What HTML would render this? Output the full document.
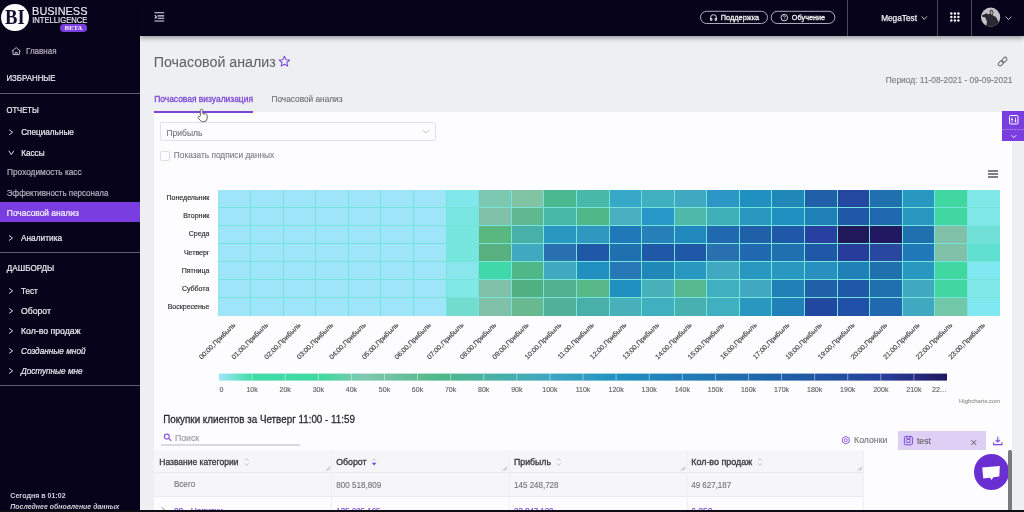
<!DOCTYPE html>
<html><head><meta charset="utf-8">
<style>
*{box-sizing:border-box;margin:0;padding:0}
html,body{width:1024px;height:512px;overflow:hidden;background:#edeff2;font-family:"Liberation Sans",sans-serif}
.a{position:absolute;white-space:nowrap}
.ov{position:absolute;left:0;top:0;z-index:2;will-change:transform}
.hi{z-index:3}
.top{z-index:6}
</style></head><body>
<!-- sidebar & header backgrounds -->
<div class="a" style="left:0;top:0;width:140px;height:512px;background:#07031a"></div>
<div class="a" style="left:140px;top:0;width:884px;height:36px;background:#07031a;box-shadow:0 2px 5px rgba(0,0,0,.38)"></div>
<!-- sidebar separators -->
<div class="a" style="left:0;top:93px;width:140px;height:1px;background:#625a70"></div>
<div class="a" style="left:0;top:252px;width:140px;height:1px;background:#625a70"></div>
<div class="a" style="left:0;top:385px;width:140px;height:1px;background:#625a70"></div>
<!-- active item -->
<div class="a" style="left:0;top:202px;width:140px;height:20px;background:#7a3ee0"></div>

<!-- card -->
<div class="a" style="left:154px;top:112px;width:858px;height:400px;background:#fdfcfe"></div>
<!-- tab underline -->
<div class="a" style="left:154px;top:111px;width:99px;height:2px;background:#7b45d8;z-index:1"></div>

<!-- select box & checkbox -->
<div class="a" style="left:160px;top:122px;width:276px;height:19px;border:1px solid #e2e1e6;border-radius:2px"></div>
<div class="a" style="left:160px;top:151px;width:10px;height:10px;border:1px solid #dedde2;border-radius:2px"></div>

<!-- table boxes -->
<div class="a" style="left:154px;top:450px;width:710px;height:46px;background:#f6f6f8"></div>
<div class="a" style="left:154px;top:472px;width:710px;height:1px;background:#ebebef"></div>
<div class="a" style="left:154px;top:496px;width:710px;height:1px;background:#ebebef"></div>
<div class="a" style="left:331px;top:450px;width:1px;height:60px;background:#f0f0f3"></div>
<div class="a" style="left:509px;top:450px;width:1px;height:60px;background:#f0f0f3"></div>
<div class="a" style="left:687px;top:450px;width:1px;height:60px;background:#f0f0f3"></div>
<div class="a" style="left:863px;top:450px;width:1px;height:60px;background:#f0f0f3"></div>
<div class="a" style="left:161px;top:444px;width:139px;height:1.5px;background:#d9d9de"></div>
<!-- chip -->
<div class="a" style="left:898px;top:431px;width:88px;height:19px;background:#ddd0f4"></div>

<svg class="ov" width="1024" height="512" viewBox="0 0 1024 512">
<defs><linearGradient id="lg" x1="0" x2="1" y1="0" y2="0"><stop offset="0" stop-color="#a0e6f8"/><stop offset="0.045" stop-color="#40dca8"/><stop offset="0.14" stop-color="#40d8a0"/><stop offset="0.2" stop-color="#80c8b0"/><stop offset="0.3" stop-color="#50b888"/><stop offset="0.38" stop-color="#48b0a8"/><stop offset="0.45" stop-color="#40a8c0"/><stop offset="0.55" stop-color="#2090c0"/><stop offset="0.7" stop-color="#2070b0"/><stop offset="0.85" stop-color="#2050a0"/><stop offset="0.92" stop-color="#283c98"/><stop offset="1" stop-color="#201860"/></linearGradient></defs>
<rect x="218" y="190" width="782" height="126" fill="#76e4da"/><rect x="218" y="190" width="32" height="17" fill="#9fe5f9"/><rect x="251" y="190" width="32" height="17" fill="#9fe5f9"/><rect x="284" y="190" width="31" height="17" fill="#9fe5f9"/><rect x="316" y="190" width="32" height="17" fill="#9fe5f9"/><rect x="349" y="190" width="31" height="17" fill="#9fe5f9"/><rect x="381" y="190" width="32" height="17" fill="#9fe5f9"/><rect x="414" y="190" width="32" height="17" fill="#9fe5f9"/><rect x="447" y="190" width="31" height="17" fill="#80e8ea"/><rect x="479" y="190" width="32" height="17" fill="#7cc8b0"/><rect x="512" y="190" width="31" height="17" fill="#80c4a4"/><rect x="544" y="190" width="32" height="17" fill="#4cb890"/><rect x="577" y="190" width="32" height="17" fill="#48b8a8"/><rect x="610" y="190" width="31" height="17" fill="#38a8c8"/><rect x="642" y="190" width="32" height="17" fill="#40b0c0"/><rect x="675" y="190" width="31" height="17" fill="#40a8c0"/><rect x="707" y="190" width="32" height="17" fill="#2c96c6"/><rect x="740" y="190" width="31" height="17" fill="#2090c0"/><rect x="772" y="190" width="32" height="17" fill="#2088b8"/><rect x="805" y="190" width="32" height="17" fill="#2060a8"/><rect x="838" y="190" width="31" height="17" fill="#2448a0"/><rect x="870" y="190" width="32" height="17" fill="#2070b0"/><rect x="903" y="190" width="31" height="17" fill="#2898c0"/><rect x="935" y="190" width="32" height="17" fill="#40d8a0"/><rect x="968" y="190" width="32" height="17" fill="#80e8e8"/><rect x="218" y="208" width="32" height="17" fill="#9fe5f9"/><rect x="251" y="208" width="32" height="17" fill="#9fe5f9"/><rect x="284" y="208" width="31" height="17" fill="#9fe5f9"/><rect x="316" y="208" width="32" height="17" fill="#9fe5f9"/><rect x="349" y="208" width="31" height="17" fill="#9fe5f9"/><rect x="381" y="208" width="32" height="17" fill="#9fe5f9"/><rect x="414" y="208" width="32" height="17" fill="#9fe5f9"/><rect x="447" y="208" width="31" height="17" fill="#7ae6e2"/><rect x="479" y="208" width="32" height="17" fill="#80c0a8"/><rect x="512" y="208" width="31" height="17" fill="#60b890"/><rect x="544" y="208" width="32" height="17" fill="#48b8a8"/><rect x="577" y="208" width="32" height="17" fill="#50b888"/><rect x="610" y="208" width="31" height="17" fill="#48b0c0"/><rect x="642" y="208" width="32" height="17" fill="#2898c8"/><rect x="675" y="208" width="31" height="17" fill="#50b8a8"/><rect x="707" y="208" width="32" height="17" fill="#40b0b8"/><rect x="740" y="208" width="31" height="17" fill="#2898c0"/><rect x="772" y="208" width="32" height="17" fill="#2090c0"/><rect x="805" y="208" width="32" height="17" fill="#2080b8"/><rect x="838" y="208" width="31" height="17" fill="#2058a8"/><rect x="870" y="208" width="32" height="17" fill="#2068b0"/><rect x="903" y="208" width="31" height="17" fill="#2898c0"/><rect x="935" y="208" width="32" height="17" fill="#40d8a0"/><rect x="968" y="208" width="32" height="17" fill="#80e8e8"/><rect x="218" y="226" width="32" height="17" fill="#9fe5f9"/><rect x="251" y="226" width="32" height="17" fill="#9fe5f9"/><rect x="284" y="226" width="31" height="17" fill="#9fe5f9"/><rect x="316" y="226" width="32" height="17" fill="#9fe5f9"/><rect x="349" y="226" width="31" height="17" fill="#9fe5f9"/><rect x="381" y="226" width="32" height="17" fill="#9fe5f9"/><rect x="414" y="226" width="32" height="17" fill="#9fe5f9"/><rect x="447" y="226" width="31" height="17" fill="#76e6de"/><rect x="479" y="226" width="32" height="17" fill="#58b880"/><rect x="512" y="226" width="31" height="17" fill="#48b0a8"/><rect x="544" y="226" width="32" height="17" fill="#2898c0"/><rect x="577" y="226" width="32" height="17" fill="#3098c0"/><rect x="610" y="226" width="31" height="17" fill="#2078b8"/><rect x="642" y="226" width="32" height="17" fill="#2880b8"/><rect x="675" y="226" width="31" height="17" fill="#2088bc"/><rect x="707" y="226" width="32" height="17" fill="#2068b0"/><rect x="740" y="226" width="31" height="17" fill="#2060a8"/><rect x="772" y="226" width="32" height="17" fill="#2058a8"/><rect x="805" y="226" width="32" height="17" fill="#2840a0"/><rect x="838" y="226" width="31" height="17" fill="#201858"/><rect x="870" y="226" width="32" height="17" fill="#201860"/><rect x="903" y="226" width="31" height="17" fill="#2070b0"/><rect x="935" y="226" width="32" height="17" fill="#80c0a8"/><rect x="968" y="226" width="32" height="17" fill="#70e0d8"/><rect x="218" y="244" width="32" height="17" fill="#9fe5f9"/><rect x="251" y="244" width="32" height="17" fill="#9fe5f9"/><rect x="284" y="244" width="31" height="17" fill="#9fe5f9"/><rect x="316" y="244" width="32" height="17" fill="#9fe5f9"/><rect x="349" y="244" width="31" height="17" fill="#9fe5f9"/><rect x="381" y="244" width="32" height="17" fill="#9fe5f9"/><rect x="414" y="244" width="32" height="17" fill="#9fe5f9"/><rect x="447" y="244" width="31" height="17" fill="#76e6de"/><rect x="479" y="244" width="32" height="17" fill="#58b080"/><rect x="512" y="244" width="31" height="17" fill="#40a8c0"/><rect x="544" y="244" width="32" height="17" fill="#2870b0"/><rect x="577" y="244" width="32" height="17" fill="#2058a8"/><rect x="610" y="244" width="31" height="17" fill="#2070b0"/><rect x="642" y="244" width="32" height="17" fill="#2058a8"/><rect x="675" y="244" width="31" height="17" fill="#2058a8"/><rect x="707" y="244" width="32" height="17" fill="#2870b0"/><rect x="740" y="244" width="31" height="17" fill="#2068b0"/><rect x="772" y="244" width="32" height="17" fill="#2070b0"/><rect x="805" y="244" width="32" height="17" fill="#2058a8"/><rect x="838" y="244" width="31" height="17" fill="#283c9c"/><rect x="870" y="244" width="32" height="17" fill="#2848a0"/><rect x="903" y="244" width="31" height="17" fill="#2078b8"/><rect x="935" y="244" width="32" height="17" fill="#80c0a8"/><rect x="968" y="244" width="32" height="17" fill="#60e0d0"/><rect x="218" y="262" width="32" height="17" fill="#9fe5f9"/><rect x="251" y="262" width="32" height="17" fill="#9fe5f9"/><rect x="284" y="262" width="31" height="17" fill="#9fe5f9"/><rect x="316" y="262" width="32" height="17" fill="#9fe5f9"/><rect x="349" y="262" width="31" height="17" fill="#9fe5f9"/><rect x="381" y="262" width="32" height="17" fill="#9fe5f9"/><rect x="414" y="262" width="32" height="17" fill="#9fe5f9"/><rect x="447" y="262" width="31" height="17" fill="#88e6ec"/><rect x="479" y="262" width="32" height="17" fill="#40d8a8"/><rect x="512" y="262" width="31" height="17" fill="#50b888"/><rect x="544" y="262" width="32" height="17" fill="#40a8c0"/><rect x="577" y="262" width="32" height="17" fill="#2090c0"/><rect x="610" y="262" width="31" height="17" fill="#2878b8"/><rect x="642" y="262" width="32" height="17" fill="#2088b8"/><rect x="675" y="262" width="31" height="17" fill="#2898c0"/><rect x="707" y="262" width="32" height="17" fill="#40a8c0"/><rect x="740" y="262" width="31" height="17" fill="#2898c0"/><rect x="772" y="262" width="32" height="17" fill="#2898c0"/><rect x="805" y="262" width="32" height="17" fill="#2890c0"/><rect x="838" y="262" width="31" height="17" fill="#2080b8"/><rect x="870" y="262" width="32" height="17" fill="#2070b0"/><rect x="903" y="262" width="31" height="17" fill="#2898c0"/><rect x="935" y="262" width="32" height="17" fill="#40d8a0"/><rect x="968" y="262" width="32" height="17" fill="#80e8f0"/><rect x="218" y="280" width="32" height="17" fill="#9fe5f9"/><rect x="251" y="280" width="32" height="17" fill="#9fe5f9"/><rect x="284" y="280" width="31" height="17" fill="#9fe5f9"/><rect x="316" y="280" width="32" height="17" fill="#9fe5f9"/><rect x="349" y="280" width="31" height="17" fill="#9fe5f9"/><rect x="381" y="280" width="32" height="17" fill="#9fe5f9"/><rect x="414" y="280" width="32" height="17" fill="#9fe5f9"/><rect x="447" y="280" width="31" height="17" fill="#80e8e6"/><rect x="479" y="280" width="32" height="17" fill="#80c0a8"/><rect x="512" y="280" width="31" height="17" fill="#50b080"/><rect x="544" y="280" width="32" height="17" fill="#50b090"/><rect x="577" y="280" width="32" height="17" fill="#58b888"/><rect x="610" y="280" width="31" height="17" fill="#2090c0"/><rect x="642" y="280" width="32" height="17" fill="#48b0b8"/><rect x="675" y="280" width="31" height="17" fill="#58b890"/><rect x="707" y="280" width="32" height="17" fill="#40b0c0"/><rect x="740" y="280" width="31" height="17" fill="#40a8c0"/><rect x="772" y="280" width="32" height="17" fill="#2080b8"/><rect x="805" y="280" width="32" height="17" fill="#2060a8"/><rect x="838" y="280" width="31" height="17" fill="#2058a8"/><rect x="870" y="280" width="32" height="17" fill="#2070b0"/><rect x="903" y="280" width="31" height="17" fill="#40a8c0"/><rect x="935" y="280" width="32" height="17" fill="#40d8a0"/><rect x="968" y="280" width="32" height="17" fill="#80e8e8"/><rect x="218" y="298" width="32" height="18" fill="#9fe5f9"/><rect x="251" y="298" width="32" height="18" fill="#9fe5f9"/><rect x="284" y="298" width="31" height="18" fill="#9fe5f9"/><rect x="316" y="298" width="32" height="18" fill="#9fe5f9"/><rect x="349" y="298" width="31" height="18" fill="#9fe5f9"/><rect x="381" y="298" width="32" height="18" fill="#9fe5f9"/><rect x="414" y="298" width="32" height="18" fill="#9fe5f9"/><rect x="447" y="298" width="31" height="18" fill="#72dcce"/><rect x="479" y="298" width="32" height="18" fill="#80c0a8"/><rect x="512" y="298" width="31" height="18" fill="#68b890"/><rect x="544" y="298" width="32" height="18" fill="#50b098"/><rect x="577" y="298" width="32" height="18" fill="#48b0a8"/><rect x="610" y="298" width="31" height="18" fill="#48b0b8"/><rect x="642" y="298" width="32" height="18" fill="#40b0c0"/><rect x="675" y="298" width="31" height="18" fill="#48b0b0"/><rect x="707" y="298" width="32" height="18" fill="#40b0c0"/><rect x="740" y="298" width="31" height="18" fill="#2898c0"/><rect x="772" y="298" width="32" height="18" fill="#2080b8"/><rect x="805" y="298" width="32" height="18" fill="#2048a0"/><rect x="838" y="298" width="31" height="18" fill="#2050a8"/><rect x="870" y="298" width="32" height="18" fill="#2068b0"/><rect x="903" y="298" width="31" height="18" fill="#40a8c0"/><rect x="935" y="298" width="32" height="18" fill="#70c8a8"/><rect x="968" y="298" width="32" height="18" fill="#80e8f0"/>
<rect x="219" y="373.6" width="728" height="7" fill="url(#lg)"/><rect x="251.6" y="373.6" width="1" height="7" fill="#ffffff" opacity="0.45"/><rect x="284.7" y="373.6" width="1" height="7" fill="#ffffff" opacity="0.45"/><rect x="317.8" y="373.6" width="1" height="7" fill="#ffffff" opacity="0.45"/><rect x="350.9" y="373.6" width="1" height="7" fill="#ffffff" opacity="0.45"/><rect x="384.0" y="373.6" width="1" height="7" fill="#ffffff" opacity="0.45"/><rect x="417.0" y="373.6" width="1" height="7" fill="#ffffff" opacity="0.45"/><rect x="450.1" y="373.6" width="1" height="7" fill="#ffffff" opacity="0.45"/><rect x="483.2" y="373.6" width="1" height="7" fill="#ffffff" opacity="0.45"/><rect x="516.3" y="373.6" width="1" height="7" fill="#ffffff" opacity="0.45"/><rect x="549.4" y="373.6" width="1" height="7" fill="#ffffff" opacity="0.45"/><rect x="582.5" y="373.6" width="1" height="7" fill="#ffffff" opacity="0.45"/><rect x="615.6" y="373.6" width="1" height="7" fill="#ffffff" opacity="0.45"/><rect x="648.7" y="373.6" width="1" height="7" fill="#ffffff" opacity="0.45"/><rect x="681.8" y="373.6" width="1" height="7" fill="#ffffff" opacity="0.45"/><rect x="714.9" y="373.6" width="1" height="7" fill="#ffffff" opacity="0.45"/><rect x="748.0" y="373.6" width="1" height="7" fill="#ffffff" opacity="0.45"/><rect x="781.0" y="373.6" width="1" height="7" fill="#ffffff" opacity="0.45"/><rect x="814.1" y="373.6" width="1" height="7" fill="#ffffff" opacity="0.45"/><rect x="847.2" y="373.6" width="1" height="7" fill="#ffffff" opacity="0.45"/><rect x="880.3" y="373.6" width="1" height="7" fill="#ffffff" opacity="0.45"/><rect x="913.4" y="373.6" width="1" height="7" fill="#ffffff" opacity="0.45"/>
<text x="26.06" y="53.75" font-family="Liberation Sans" font-size="9.00" fill="#b4b0be" font-weight="normal" font-style="normal" textLength="30.48" lengthAdjust="spacingAndGlyphs" stroke="#b4b0be" stroke-width="0.22">Главная</text><text x="6.46" y="81.40" font-family="Liberation Sans" font-size="9.00" fill="#ebe9f0" font-weight="normal" font-style="normal" textLength="49.08" lengthAdjust="spacingAndGlyphs" stroke="#ebe9f0" stroke-width="0.22">ИЗБРАННЫЕ</text><text x="6.46" y="112.70" font-family="Liberation Sans" font-size="9.00" fill="#ebe9f0" font-weight="normal" font-style="normal" textLength="32.38" lengthAdjust="spacingAndGlyphs" stroke="#ebe9f0" stroke-width="0.22">ОТЧЕТЫ</text><text x="21.16" y="135.00" font-family="Liberation Sans" font-size="9.00" fill="#ebe9f0" font-weight="normal" font-style="normal" textLength="52.68" lengthAdjust="spacingAndGlyphs" stroke="#ebe9f0" stroke-width="0.22">Специальные</text><text x="21.16" y="155.50" font-family="Liberation Sans" font-size="9.00" fill="#ebe9f0" font-weight="normal" font-style="normal" textLength="23.38" lengthAdjust="spacingAndGlyphs" stroke="#ebe9f0" stroke-width="0.22">Кассы</text><text x="7.06" y="175.10" font-family="Liberation Sans" font-size="9.00" fill="#b4b0be" font-weight="normal" font-style="normal" textLength="74.58" lengthAdjust="spacingAndGlyphs" stroke="#b4b0be" stroke-width="0.22">Проходимость касс</text><text x="6.86" y="195.60" font-family="Liberation Sans" font-size="9.00" fill="#b4b0be" font-weight="normal" font-style="normal" textLength="101.58" lengthAdjust="spacingAndGlyphs" stroke="#b4b0be" stroke-width="0.22">Эффективность персонала</text><text x="6.86" y="216.20" font-family="Liberation Sans" font-size="9.00" fill="#f6f2ff" font-weight="normal" font-style="normal" textLength="71.88" lengthAdjust="spacingAndGlyphs" stroke="#f6f2ff" stroke-width="0.22">Почасовой анализ</text><text x="20.96" y="240.60" font-family="Liberation Sans" font-size="9.00" fill="#ebe9f0" font-weight="normal" font-style="normal" textLength="41.18" lengthAdjust="spacingAndGlyphs" stroke="#ebe9f0" stroke-width="0.22">Аналитика</text><text x="6.86" y="271.00" font-family="Liberation Sans" font-size="9.00" fill="#ebe9f0" font-weight="normal" font-style="normal" textLength="47.38" lengthAdjust="spacingAndGlyphs" stroke="#ebe9f0" stroke-width="0.22">ДАШБОРДЫ</text><text x="20.96" y="293.70" font-family="Liberation Sans" font-size="9.00" fill="#ebe9f0" font-weight="normal" font-style="normal" textLength="16.68" lengthAdjust="spacingAndGlyphs" stroke="#ebe9f0" stroke-width="0.22">Тест</text><text x="20.96" y="313.60" font-family="Liberation Sans" font-size="9.00" fill="#ebe9f0" font-weight="normal" font-style="normal" textLength="29.98" lengthAdjust="spacingAndGlyphs" stroke="#ebe9f0" stroke-width="0.22">Оборот</text><text x="20.96" y="334.00" font-family="Liberation Sans" font-size="9.00" fill="#ebe9f0" font-weight="normal" font-style="normal" textLength="59.58" lengthAdjust="spacingAndGlyphs" stroke="#ebe9f0" stroke-width="0.22">Кол-во продаж</text><text x="20.96" y="353.80" font-family="Liberation Sans" font-size="9.00" fill="#ebe9f0" font-weight="normal" font-style="italic" textLength="64.58" lengthAdjust="spacingAndGlyphs" stroke="#ebe9f0" stroke-width="0.22">Созданные мной</text><text x="20.96" y="373.75" font-family="Liberation Sans" font-size="9.00" fill="#ebe9f0" font-weight="normal" font-style="italic" textLength="61.58" lengthAdjust="spacingAndGlyphs" stroke="#ebe9f0" stroke-width="0.22">Доступные мне</text><text x="10.33" y="498.00" font-family="Liberation Sans" font-size="7.80" fill="#d6d2de" font-weight="bold" font-style="normal" textLength="55.34" lengthAdjust="spacingAndGlyphs">Сегодня в 01:02</text><text x="10.34" y="509.40" font-family="Liberation Sans" font-size="7.60" fill="#d6d2de" font-weight="bold" font-style="italic" textLength="109.11" lengthAdjust="spacingAndGlyphs">Последнее обновление данных</text><text x="5.02" y="23.90" font-family="Liberation Serif" font-size="21.38" fill="#140c2c" font-weight="bold" font-style="normal" textLength="19.67" lengthAdjust="spacingAndGlyphs">BI</text><text x="32.09" y="14.60" font-family="Liberation Sans" font-size="10.20" fill="#ece9f2" font-weight="normal" font-style="normal" textLength="55.42" lengthAdjust="spacingAndGlyphs" stroke="#ece9f2" stroke-width="0.15">BUSINESS</text><text x="32.21" y="22.70" font-family="Liberation Sans" font-size="8.20" fill="#ece9f2" font-weight="normal" font-style="normal" textLength="55.18" lengthAdjust="spacingAndGlyphs" stroke="#ece9f2" stroke-width="0.15">INTELLIGENCE</text><text x="64.60" y="30.10" font-family="Liberation Serif" font-size="6.60" fill="#f6f2ff" font-weight="bold" font-style="normal" textLength="17.79" lengthAdjust="spacingAndGlyphs">BETA</text><text x="720.79" y="20.00" font-family="Liberation Sans" font-size="7.60" fill="#f2f2f2" font-weight="normal" font-style="normal" textLength="38.41" lengthAdjust="spacingAndGlyphs" stroke="#f2f2f2" stroke-width="0.3">Поддержка</text><text x="791.84" y="20.00" font-family="Liberation Sans" font-size="7.60" fill="#f2f2f2" font-weight="normal" font-style="normal" textLength="33.31" lengthAdjust="spacingAndGlyphs" stroke="#f2f2f2" stroke-width="0.3">Обучение</text><text x="881.16" y="20.70" font-family="Liberation Sans" font-size="9.00" fill="#f0eef5" font-weight="normal" font-style="normal" textLength="35.78" lengthAdjust="spacingAndGlyphs" stroke="#f0eef5" stroke-width="0.25">MegaTest</text><text x="153.79" y="67.10" font-family="Liberation Sans" font-size="15.20" fill="#606066" font-weight="normal" font-style="normal" textLength="121.92" lengthAdjust="spacingAndGlyphs" stroke="#606066" stroke-width="0.05">Почасовой анализ</text><text x="885.75" y="82.50" font-family="Liberation Sans" font-size="9.20" fill="#7a7a80" font-weight="normal" font-style="normal" textLength="126.80" lengthAdjust="spacingAndGlyphs" stroke="#7a7a80" stroke-width="0.12">Период: 11-08-2021 - 09-09-2021</text><text x="154.20" y="102.30" font-family="Liberation Sans" font-size="8.40" fill="#7a45d6" font-weight="normal" font-style="normal" textLength="98.81" lengthAdjust="spacingAndGlyphs" stroke="#7a45d6" stroke-width="0.28">Почасовая визуализация</text><text x="271.50" y="102.30" font-family="Liberation Sans" font-size="8.40" fill="#6e6e74" font-weight="normal" font-style="normal" textLength="71.01" lengthAdjust="spacingAndGlyphs" stroke="#6e6e74" stroke-width="0.12">Почасовой анализ</text><text x="166.47" y="135.50" font-family="Liberation Sans" font-size="8.80" fill="#707076" font-weight="normal" font-style="normal" textLength="35.96" lengthAdjust="spacingAndGlyphs" stroke="#707076" stroke-width="0.1">Прибыль</text><text x="173.80" y="158.40" font-family="Liberation Sans" font-size="8.40" fill="#7a7a80" font-weight="normal" font-style="normal" textLength="100.41" lengthAdjust="spacingAndGlyphs" stroke="#7a7a80" stroke-width="0.1">Показать подписи данных</text><text x="209.4" y="200.20" text-anchor="end" font-family="Liberation Sans" font-size="7" fill="#333" stroke="#333" stroke-width="0.18">Понедельник</text><text x="209.4" y="218.30" text-anchor="end" font-family="Liberation Sans" font-size="7" fill="#333" stroke="#333" stroke-width="0.18">Вторник</text><text x="209.4" y="236.40" text-anchor="end" font-family="Liberation Sans" font-size="7" fill="#333" stroke="#333" stroke-width="0.18">Среда</text><text x="209.4" y="254.50" text-anchor="end" font-family="Liberation Sans" font-size="7" fill="#333" stroke="#333" stroke-width="0.18">Четверг</text><text x="209.4" y="272.60" text-anchor="end" font-family="Liberation Sans" font-size="7" fill="#333" stroke="#333" stroke-width="0.18">Пятница</text><text x="209.4" y="290.70" text-anchor="end" font-family="Liberation Sans" font-size="7" fill="#333" stroke="#333" stroke-width="0.18">Суббота</text><text x="209.4" y="308.80" text-anchor="end" font-family="Liberation Sans" font-size="7" fill="#333" stroke="#333" stroke-width="0.18">Воскресенье</text><text x="235.9" y="325.5" text-anchor="end" font-family="Liberation Sans" font-size="6.9" fill="#484848" stroke="#484848" stroke-width="0.18" transform="rotate(-45 235.9 325.5)">00:00,Прибыль</text><text x="268.5" y="325.5" text-anchor="end" font-family="Liberation Sans" font-size="6.9" fill="#484848" stroke="#484848" stroke-width="0.18" transform="rotate(-45 268.5 325.5)">01:00,Прибыль</text><text x="301.1" y="325.5" text-anchor="end" font-family="Liberation Sans" font-size="6.9" fill="#484848" stroke="#484848" stroke-width="0.18" transform="rotate(-45 301.1 325.5)">02:00,Прибыль</text><text x="333.6" y="325.5" text-anchor="end" font-family="Liberation Sans" font-size="6.9" fill="#484848" stroke="#484848" stroke-width="0.18" transform="rotate(-45 333.6 325.5)">03:00,Прибыль</text><text x="366.2" y="325.5" text-anchor="end" font-family="Liberation Sans" font-size="6.9" fill="#484848" stroke="#484848" stroke-width="0.18" transform="rotate(-45 366.2 325.5)">04:00,Прибыль</text><text x="398.8" y="325.5" text-anchor="end" font-family="Liberation Sans" font-size="6.9" fill="#484848" stroke="#484848" stroke-width="0.18" transform="rotate(-45 398.8 325.5)">05:00,Прибыль</text><text x="431.4" y="325.5" text-anchor="end" font-family="Liberation Sans" font-size="6.9" fill="#484848" stroke="#484848" stroke-width="0.18" transform="rotate(-45 431.4 325.5)">06:00,Прибыль</text><text x="464.0" y="325.5" text-anchor="end" font-family="Liberation Sans" font-size="6.9" fill="#484848" stroke="#484848" stroke-width="0.18" transform="rotate(-45 464.0 325.5)">07:00,Прибыль</text><text x="496.6" y="325.5" text-anchor="end" font-family="Liberation Sans" font-size="6.9" fill="#484848" stroke="#484848" stroke-width="0.18" transform="rotate(-45 496.6 325.5)">08:00,Прибыль</text><text x="529.1" y="325.5" text-anchor="end" font-family="Liberation Sans" font-size="6.9" fill="#484848" stroke="#484848" stroke-width="0.18" transform="rotate(-45 529.1 325.5)">09:00,Прибыль</text><text x="561.7" y="325.5" text-anchor="end" font-family="Liberation Sans" font-size="6.9" fill="#484848" stroke="#484848" stroke-width="0.18" transform="rotate(-45 561.7 325.5)">10:00,Прибыль</text><text x="594.3" y="325.5" text-anchor="end" font-family="Liberation Sans" font-size="6.9" fill="#484848" stroke="#484848" stroke-width="0.18" transform="rotate(-45 594.3 325.5)">11:00,Прибыль</text><text x="626.9" y="325.5" text-anchor="end" font-family="Liberation Sans" font-size="6.9" fill="#484848" stroke="#484848" stroke-width="0.18" transform="rotate(-45 626.9 325.5)">12:00,Прибыль</text><text x="659.5" y="325.5" text-anchor="end" font-family="Liberation Sans" font-size="6.9" fill="#484848" stroke="#484848" stroke-width="0.18" transform="rotate(-45 659.5 325.5)">13:00,Прибыль</text><text x="692.1" y="325.5" text-anchor="end" font-family="Liberation Sans" font-size="6.9" fill="#484848" stroke="#484848" stroke-width="0.18" transform="rotate(-45 692.1 325.5)">14:00,Прибыль</text><text x="724.6" y="325.5" text-anchor="end" font-family="Liberation Sans" font-size="6.9" fill="#484848" stroke="#484848" stroke-width="0.18" transform="rotate(-45 724.6 325.5)">15:00,Прибыль</text><text x="757.2" y="325.5" text-anchor="end" font-family="Liberation Sans" font-size="6.9" fill="#484848" stroke="#484848" stroke-width="0.18" transform="rotate(-45 757.2 325.5)">16:00,Прибыль</text><text x="789.8" y="325.5" text-anchor="end" font-family="Liberation Sans" font-size="6.9" fill="#484848" stroke="#484848" stroke-width="0.18" transform="rotate(-45 789.8 325.5)">17:00,Прибыль</text><text x="822.4" y="325.5" text-anchor="end" font-family="Liberation Sans" font-size="6.9" fill="#484848" stroke="#484848" stroke-width="0.18" transform="rotate(-45 822.4 325.5)">18:00,Прибыль</text><text x="855.0" y="325.5" text-anchor="end" font-family="Liberation Sans" font-size="6.9" fill="#484848" stroke="#484848" stroke-width="0.18" transform="rotate(-45 855.0 325.5)">19:00,Прибыль</text><text x="887.6" y="325.5" text-anchor="end" font-family="Liberation Sans" font-size="6.9" fill="#484848" stroke="#484848" stroke-width="0.18" transform="rotate(-45 887.6 325.5)">20:00,Прибыль</text><text x="920.1" y="325.5" text-anchor="end" font-family="Liberation Sans" font-size="6.9" fill="#484848" stroke="#484848" stroke-width="0.18" transform="rotate(-45 920.1 325.5)">21:00,Прибыль</text><text x="952.7" y="325.5" text-anchor="end" font-family="Liberation Sans" font-size="6.9" fill="#484848" stroke="#484848" stroke-width="0.18" transform="rotate(-45 952.7 325.5)">22:00,Прибыль</text><text x="985.3" y="325.5" text-anchor="end" font-family="Liberation Sans" font-size="6.9" fill="#484848" stroke="#484848" stroke-width="0.18" transform="rotate(-45 985.3 325.5)">23:00,Прибыль</text><text x="219.5" y="392.3" font-family="Liberation Sans" font-size="7" fill="#666" stroke="#666" stroke-width="0.15">0</text><text x="252.1" y="392.3" text-anchor="middle" font-family="Liberation Sans" font-size="7" fill="#666" stroke="#666" stroke-width="0.15">10k</text><text x="285.2" y="392.3" text-anchor="middle" font-family="Liberation Sans" font-size="7" fill="#666" stroke="#666" stroke-width="0.15">20k</text><text x="318.3" y="392.3" text-anchor="middle" font-family="Liberation Sans" font-size="7" fill="#666" stroke="#666" stroke-width="0.15">30k</text><text x="351.4" y="392.3" text-anchor="middle" font-family="Liberation Sans" font-size="7" fill="#666" stroke="#666" stroke-width="0.15">40k</text><text x="384.5" y="392.3" text-anchor="middle" font-family="Liberation Sans" font-size="7" fill="#666" stroke="#666" stroke-width="0.15">50k</text><text x="417.5" y="392.3" text-anchor="middle" font-family="Liberation Sans" font-size="7" fill="#666" stroke="#666" stroke-width="0.15">60k</text><text x="450.6" y="392.3" text-anchor="middle" font-family="Liberation Sans" font-size="7" fill="#666" stroke="#666" stroke-width="0.15">70k</text><text x="483.7" y="392.3" text-anchor="middle" font-family="Liberation Sans" font-size="7" fill="#666" stroke="#666" stroke-width="0.15">80k</text><text x="516.8" y="392.3" text-anchor="middle" font-family="Liberation Sans" font-size="7" fill="#666" stroke="#666" stroke-width="0.15">90k</text><text x="549.9" y="392.3" text-anchor="middle" font-family="Liberation Sans" font-size="7" fill="#666" stroke="#666" stroke-width="0.15">100k</text><text x="583.0" y="392.3" text-anchor="middle" font-family="Liberation Sans" font-size="7" fill="#666" stroke="#666" stroke-width="0.15">110k</text><text x="616.1" y="392.3" text-anchor="middle" font-family="Liberation Sans" font-size="7" fill="#666" stroke="#666" stroke-width="0.15">120k</text><text x="649.2" y="392.3" text-anchor="middle" font-family="Liberation Sans" font-size="7" fill="#666" stroke="#666" stroke-width="0.15">130k</text><text x="682.3" y="392.3" text-anchor="middle" font-family="Liberation Sans" font-size="7" fill="#666" stroke="#666" stroke-width="0.15">140k</text><text x="715.4" y="392.3" text-anchor="middle" font-family="Liberation Sans" font-size="7" fill="#666" stroke="#666" stroke-width="0.15">150k</text><text x="748.5" y="392.3" text-anchor="middle" font-family="Liberation Sans" font-size="7" fill="#666" stroke="#666" stroke-width="0.15">160k</text><text x="781.5" y="392.3" text-anchor="middle" font-family="Liberation Sans" font-size="7" fill="#666" stroke="#666" stroke-width="0.15">170k</text><text x="814.6" y="392.3" text-anchor="middle" font-family="Liberation Sans" font-size="7" fill="#666" stroke="#666" stroke-width="0.15">180k</text><text x="847.7" y="392.3" text-anchor="middle" font-family="Liberation Sans" font-size="7" fill="#666" stroke="#666" stroke-width="0.15">190k</text><text x="880.8" y="392.3" text-anchor="middle" font-family="Liberation Sans" font-size="7" fill="#666" stroke="#666" stroke-width="0.15">200k</text><text x="913.9" y="392.3" text-anchor="middle" font-family="Liberation Sans" font-size="7" fill="#666" stroke="#666" stroke-width="0.15">210k</text><text x="932" y="392.3" font-family="Liberation Sans" font-size="7" fill="#666" stroke="#666" stroke-width="0.15">22…</text><text x="959.06" y="403.30" font-family="Liberation Sans" font-size="5.60" fill="#999999" font-weight="normal" font-style="normal" textLength="41.27" lengthAdjust="spacingAndGlyphs" stroke="#999999" stroke-width="0.15">Highcharts.com</text><text x="163.18" y="422.90" font-family="Liberation Sans" font-size="10.40" fill="#2c2c32" font-weight="normal" font-style="normal" textLength="191.75" lengthAdjust="spacingAndGlyphs" stroke="#2c2c32" stroke-width="0.3">Покупки клиентов за Четверг 11:00 - 11:59</text><text x="175.00" y="440.50" font-family="Liberation Sans" font-size="8.40" fill="#9a9aa0" font-weight="normal" font-style="normal" textLength="24.01" lengthAdjust="spacingAndGlyphs" stroke="#9a9aa0" stroke-width="0.15">Поиск</text><text x="854.08" y="443.40" font-family="Liberation Sans" font-size="8.60" fill="#77777c" font-weight="normal" font-style="normal" textLength="33.23" lengthAdjust="spacingAndGlyphs" stroke="#77777c" stroke-width="0.15">Колонки</text><text x="916.98" y="444.00" font-family="Liberation Sans" font-size="8.60" fill="#66666c" font-weight="normal" font-style="normal" textLength="13.93" lengthAdjust="spacingAndGlyphs" stroke="#66666c" stroke-width="0.15">test</text><text x="159.30" y="465.00" font-family="Liberation Sans" font-size="8.40" fill="#38383c" font-weight="normal" font-style="normal" textLength="79.11" lengthAdjust="spacingAndGlyphs" stroke="#38383c" stroke-width="0.3">Название категории</text><text x="336.30" y="465.00" font-family="Liberation Sans" font-size="8.40" fill="#38383c" font-weight="normal" font-style="normal" textLength="30.21" lengthAdjust="spacingAndGlyphs" stroke="#38383c" stroke-width="0.3">Оборот</text><text x="514.10" y="465.00" font-family="Liberation Sans" font-size="8.40" fill="#38383c" font-weight="normal" font-style="normal" textLength="36.91" lengthAdjust="spacingAndGlyphs" stroke="#38383c" stroke-width="0.3">Прибыль</text><text x="691.20" y="465.00" font-family="Liberation Sans" font-size="8.40" fill="#38383c" font-weight="normal" font-style="normal" textLength="61.01" lengthAdjust="spacingAndGlyphs" stroke="#38383c" stroke-width="0.3">Кол-во продаж</text><text x="173.90" y="487.40" font-family="Liberation Sans" font-size="8.40" fill="#77777c" font-weight="normal" font-style="normal" textLength="21.31" lengthAdjust="spacingAndGlyphs" stroke="#77777c" stroke-width="0.15">Всего</text><text x="336.30" y="487.60" font-family="Liberation Sans" font-size="8.40" fill="#77777c" font-weight="normal" font-style="normal" textLength="44.91" lengthAdjust="spacingAndGlyphs" stroke="#77777c" stroke-width="0.15">800 518,809</text><text x="514.10" y="487.60" font-family="Liberation Sans" font-size="8.40" fill="#77777c" font-weight="normal" font-style="normal" textLength="44.41" lengthAdjust="spacingAndGlyphs" stroke="#77777c" stroke-width="0.15">145 248,728</text><text x="691.20" y="487.60" font-family="Liberation Sans" font-size="8.40" fill="#77777c" font-weight="normal" font-style="normal" textLength="40.01" lengthAdjust="spacingAndGlyphs" stroke="#77777c" stroke-width="0.15">49 627,187</text><text x="173.90" y="514.20" font-family="Liberation Sans" font-size="8.40" fill="#7b45d8" font-weight="normal" font-style="normal" textLength="49.11" lengthAdjust="spacingAndGlyphs" stroke="#7b45d8" stroke-width="0.15">08 - Напитки</text><text x="336.30" y="514.20" font-family="Liberation Sans" font-size="8.40" fill="#7b45d8" font-weight="normal" font-style="normal" textLength="44.21" lengthAdjust="spacingAndGlyphs" stroke="#7b45d8" stroke-width="0.15">135 225 165</text><text x="514.10" y="514.20" font-family="Liberation Sans" font-size="8.40" fill="#7b45d8" font-weight="normal" font-style="normal" textLength="39.41" lengthAdjust="spacingAndGlyphs" stroke="#7b45d8" stroke-width="0.15">23 847 120</text><text x="691.20" y="514.20" font-family="Liberation Sans" font-size="8.40" fill="#7b45d8" font-weight="normal" font-style="normal" textLength="21.31" lengthAdjust="spacingAndGlyphs" stroke="#7b45d8" stroke-width="0.15">6 250</text>
</svg>

<!-- icons -->
<svg class="a hi" style="left:0;top:0" width="1024" height="512" viewBox="0 0 1024 512">
  <!-- logo circle is under text: drawn in separate div below -->
  <!-- home icon -->
  <path d="M11.8 51.2 L16.2 47.6 L20.6 51.2 M13 50.4 V54.6 H19.4 V50.4 M15.2 54.6 V52.4 H17.2 V54.6" fill="none" stroke="#cfcbd8" stroke-width="0.9"/>
  <!-- sidebar chevrons -->
  <g fill="none" stroke="#dedbe6" stroke-width="1">
    <path d="M9.2 129.8 L12.6 132.3 L9.2 134.8"/>
    <path d="M8.8 150.8 L11.3 154.6 L13.8 150.8"/>
    <path d="M9 235.5 L12.5 238 L9 240.5"/>
    <path d="M9.2 288.4 L12.6 290.9 L9.2 293.4"/>
    <path d="M9.2 308.4 L12.6 310.9 L9.2 313.4"/>
    <path d="M9.2 328.4 L12.6 330.9 L9.2 333.4"/>
    <path d="M9.2 348.4 L12.6 350.9 L9.2 353.4"/>
    <path d="M9.2 368.4 L12.6 370.9 L9.2 373.4"/>
  </g>
  <!-- header hamburger -->
  <path d="M154.5 12.8H164.2M157.6 15.9H164.2M157.6 18.2H164.2M154.5 21H164.2M154.8 15.2L156.5 16.9L154.8 18.6" fill="none" stroke="#e6e3ee" stroke-width="1.1"/>
  <!-- header buttons -->
  <rect x="700.5" y="11.3" width="67" height="12.2" rx="6.1" fill="none" stroke="#c2bdcc" stroke-width="0.9"/>
  <rect x="771.2" y="11.3" width="63.6" height="12.2" rx="6.1" fill="none" stroke="#c2bdcc" stroke-width="0.9"/>
  <path d="M710.6 20V17.6a2.9 2.9 0 0 1 5.8 0V20M710.6 18.4h1.3v2h-1.3zM715.1 18.4h1.3v2h-1.3z" fill="none" stroke="#eee" stroke-width="0.9"/>
  <circle cx="784.3" cy="17.6" r="3.3" fill="none" stroke="#eee" stroke-width="0.9"/>
  <path d="M783.3 16.7a1 1 0 1 1 1.5 .9c-.35.2-.45.4-.45.75M784.35 19.1v.35" fill="none" stroke="#eee" stroke-width="0.75"/>
  <rect x="847" y="0" width="1" height="36" fill="#4e4760"/>
  <rect x="937" y="0" width="1" height="36" fill="#4e4760"/>
  <rect x="971" y="0" width="1" height="36" fill="#4e4760"/>
  <path d="M921.6 16.4 L924.3 19.4 L927 16.4" fill="none" stroke="#ddd" stroke-width="0.9"/>
  <g fill="#f4f2f8">
    <circle cx="951.3" cy="13.5" r="1.25"/><circle cx="954.9" cy="13.5" r="1.25"/><circle cx="958.4" cy="13.5" r="1.25"/>
    <circle cx="951.3" cy="17" r="1.25"/><circle cx="954.9" cy="17" r="1.25"/><circle cx="958.4" cy="17" r="1.25"/>
    <circle cx="951.3" cy="20.6" r="1.25"/><circle cx="954.9" cy="20.6" r="1.25"/><circle cx="958.4" cy="20.6" r="1.25"/>
  </g>
  <path d="M1005.5 16.6 L1008.5 19.6 L1011.5 16.6" fill="none" stroke="#ddd" stroke-width="0.9"/>
  <!-- star -->
  <path d="M284.4 56.3l1.55 3.35 3.65.4-2.75 2.45.8 3.6-3.25-1.9-3.25 1.9.8-3.6-2.75-2.45 3.65-.4z" fill="none" stroke="#7b45d8" stroke-width="1.05" stroke-linejoin="round"/>
  <!-- link icon -->
  <g transform="rotate(-45 1002.6 61.6)" fill="none" stroke="#6a6a70" stroke-width="1">
    <rect x="997.2" y="59.8" width="6" height="3.6" rx="1.8"/>
    <rect x="1002" y="59.8" width="6" height="3.6" rx="1.8"/>
  </g>
  <!-- select chevron -->
  <path d="M423 130.2 L425.8 133 L428.6 130.2" fill="none" stroke="#b0b0b6" stroke-width="0.8"/>
  <!-- hamburger in chart -->
  <path d="M988 171H998M988 174H998M988 177H998" stroke="#555" stroke-width="1.3"/>
  <!-- search icon -->
  <circle cx="166.8" cy="436.6" r="2.5" fill="none" stroke="#8a55d8" stroke-width="1.1"/>
  <path d="M168.6 438.4L171.2 440.8" stroke="#8a55d8" stroke-width="1.2"/>
  <!-- gear -->
  <path d="M845.8 436.4L849.2 438.3V442.1L845.8 444L842.4 442.1V438.3Z" fill="none" stroke="#8150dc" stroke-width="0.95" stroke-linejoin="round"/>
  <circle cx="845.8" cy="440.2" r="1.5" fill="none" stroke="#8150dc" stroke-width="0.85"/>
  <!-- chip file icon -->
  <rect x="904.4" y="436.4" width="8" height="8.4" rx="1.2" fill="none" stroke="#7b45d8" stroke-width="1"/>
  <rect x="906.8" y="439.6" width="3.2" height="3" fill="none" stroke="#7b45d8" stroke-width="0.8"/>
  <path d="M906.4 436.4v2h4v-2" fill="none" stroke="#7b45d8" stroke-width="0.8"/>
  <path d="M971.4 440.2L976.1 444.9M976.1 440.2L971.4 444.9" stroke="#555" stroke-width="1"/>
  <!-- download -->
  <path d="M997.8 436.8V442M995.6 439.8L997.8 442L1000 439.8M993.7 442.2V444.6H1002V442.2" fill="none" stroke="#7b45d8" stroke-width="1.05"/>
  <!-- sort icons -->
  <g fill="none" stroke="#bcbcc2" stroke-width="0.9">
    <path d="M245 460.6L246.8 458.6L248.6 460.6M245 463.4L246.8 465.4L248.6 463.4"/>
    <path d="M372.3 460.6L374.1 458.6L375.9 460.6"/>
    <path d="M557 460.6L558.8 458.6L560.6 460.6M557 463.4L558.8 465.4L560.6 463.4"/>
    <path d="M758.2 460.6L760 458.6L761.8 460.6M758.2 463.4L760 465.4L761.8 463.4"/>
  </g>
  <path d="M371.9 462.8L374.1 465.6L376.3 462.8Z" fill="#7b3fd9"/>
  <!-- resize handles -->
  <g stroke="#888" stroke-width="0.6">
    <path d="M326 470.5L330 466.5M328 470.5L330 468.5"/>
    <path d="M503 470.5L507 466.5M505 470.5L507 468.5"/>
    <path d="M681 470.5L685 466.5M683 470.5L685 468.5"/>
    <path d="M858 470.5L862 466.5M860 470.5L862 468.5"/>
  </g>
  <!-- row chevron -->
  <path d="M162 507.5L164.5 510L162 512.5" fill="none" stroke="#666" stroke-width="0.9"/>
</svg>

<!-- logo circle (under text overlay? drawn above sidebar but text must be on top) -->
<div class="a" style="left:1.3px;top:3.6px;width:27.4px;height:27.4px;border-radius:50%;background:#fbfbfd;z-index:1"></div>
<div class="a" style="left:60px;top:24px;width:27px;height:8px;border-radius:4px;background:#7a3fe0;z-index:1"></div>

<!-- avatar -->
<svg class="a hi" style="left:0;top:0" width="1024" height="40" viewBox="0 0 1024 40"><defs><clipPath id="av"><circle cx="990.6" cy="17.2" r="9.6"/></clipPath></defs>
<circle cx="990.6" cy="17.2" r="9.6" fill="#c4c2c6"/>
<g clip-path="url(#av)">
<path d="M982 15.2L986.5 13.2L988.5 14.6L990 13.6L989.6 11.2Q990.6 9.2 992.6 10.2L993.6 12.6L992.6 15.2L996 17L998.6 22L1000 30H985.5L987 21.5L985.2 17.2L982.5 17Z" fill="#2a2830"/>
<path d="M990.6 10.6Q992.4 10.4 992.8 12.4L992.2 14.4L990.6 14.2Z" fill="#b8a898"/>
</g></svg>

<!-- purple side tab -->
<div class="a top" style="left:1002px;top:111px;width:22px;height:30px;background:#7a3ee0"></div>
<svg class="a top" style="left:1002px;top:111px" width="22" height="30" viewBox="0 0 22 30">
  <path d="M0 18.5H22" stroke="#b89af0" stroke-width="0.8" stroke-dasharray="1.5 1"/>
  <rect x="7.5" y="4.5" width="8.5" height="8.5" rx="1" fill="none" stroke="#fff" stroke-width="1"/>
  <path d="M10 6.5v5M13.5 6.5v5M9 8.5h2M12.5 10h2" stroke="#fff" stroke-width="0.8"/>
  <path d="M9.3 24.2L11.8 26.7L14.3 24.2" fill="none" stroke="#fff" stroke-width="0.9"/>
</svg>

<!-- scrollbar & chat -->
<div class="a top" style="left:973.6px;top:454.2px;width:35.2px;height:35.6px;border-radius:50%;background:#6a2fd0"></div>
<svg class="a top" style="left:0;top:0" width="1024" height="512" viewBox="0 0 1024 512"><path d="M982.2 467.6L999.8 466L999.3 476.6L993.3 477.3L991.6 479.9L989.9 477.7L983.3 478.5Z" fill="#fff"/></svg>

<svg class="a top" style="left:0;top:0" width="260" height="130" viewBox="0 0 260 130"><path d="M200.3 116V110.5a1.25 1.25 0 0 1 2.5 0V113.8H205.3a1.9 1.9 0 0 1 1.9 1.9V118.2q0 3.4-3.3 3.4H202.6q-1.5 0-2.5-1.3L198.2 117.8a0.95 0.95 0 0 1 1.4-1.3Z" fill="#fdfdfd" stroke="#4a4a4e" stroke-width="0.85" stroke-linejoin="round"/></svg>
<div class="a top" style="left:1008px;top:450px;width:3.5px;height:62px;background:#7a7a7e;border-radius:1.5px"></div>
<div class="a top" style="left:0;top:510px;width:1024px;height:2px;background:#0e0c14"></div>
</body></html>
